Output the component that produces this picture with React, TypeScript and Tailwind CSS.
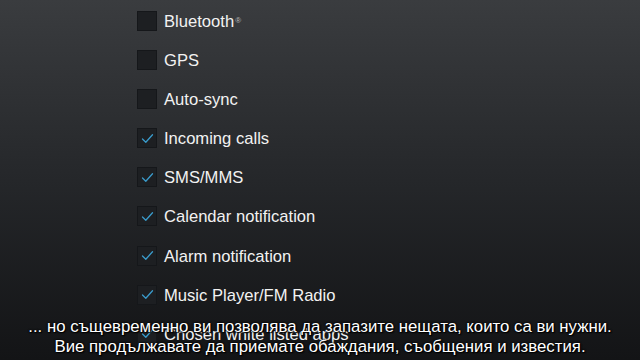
import React from "react";

const items = [
  { label: "Bluetooth", checked: false, reg: true },
  { label: "GPS", checked: false },
  { label: "Auto-sync", checked: false },
  { label: "Incoming calls", checked: true },
  { label: "SMS/MMS", checked: true },
  { label: "Calendar notification", checked: true },
  { label: "Alarm notification", checked: true },
  { label: "Music Player/FM Radio", checked: true },
  { label: "Chosen white listed apps", checked: true },
];

function Box({ checked }: { checked: boolean }) {
  return (
    <div className="w-[20px] h-[20px] shrink-0 bg-[#1d1f22] border border-[#15171a] flex items-center justify-center">
      {checked && (
        <svg width="13" height="11" viewBox="0 0 13 11" fill="none">
          <path d="M1.5 6 L4.8 9.2 L11.5 1.8" stroke="#3a9bcb" strokeWidth="1.3" strokeLinecap="round" strokeLinejoin="round" />
        </svg>
      )}
    </div>
  );
}

export default function App() {
  return (
    <div
      className="relative w-[640px] h-[360px] overflow-hidden bg-linear-to-b from-[#3a3c3f] via-[#25272a] to-[#131416]"
      style={{ fontFamily: '"Liberation Sans", Arial, sans-serif' }}
    >
      <div className="flex flex-col pl-[137px] pt-[11px]">
        {items.map((it) => (
          <div key={it.label} className="flex items-start gap-[7px] h-[39.1px]">
            <Box checked={it.checked} />
            <span className="mt-[1px] leading-[20px] text-[16.6px] text-[#f2f2f2]">
              {it.label}
              {it.reg && <sup className="text-[8px] text-[#bbbbbb] ml-[1px]">®</sup>}
            </span>
          </div>
        ))}
      </div>

      <div className="absolute left-0 right-0 bottom-[3px] flex flex-col items-center text-[16.8px] leading-[20px] text-white [text-shadow:0_0_2px_#000,0_0_2px_#000,1px_1px_1px_#000]">
        <div>... но същевременно ви позволява да запазите нещата, които са ви нужни.</div>
        <div>Вие продължавате да приемате обаждания, съобщения и известия.</div>
      </div>
    </div>
  );
}
